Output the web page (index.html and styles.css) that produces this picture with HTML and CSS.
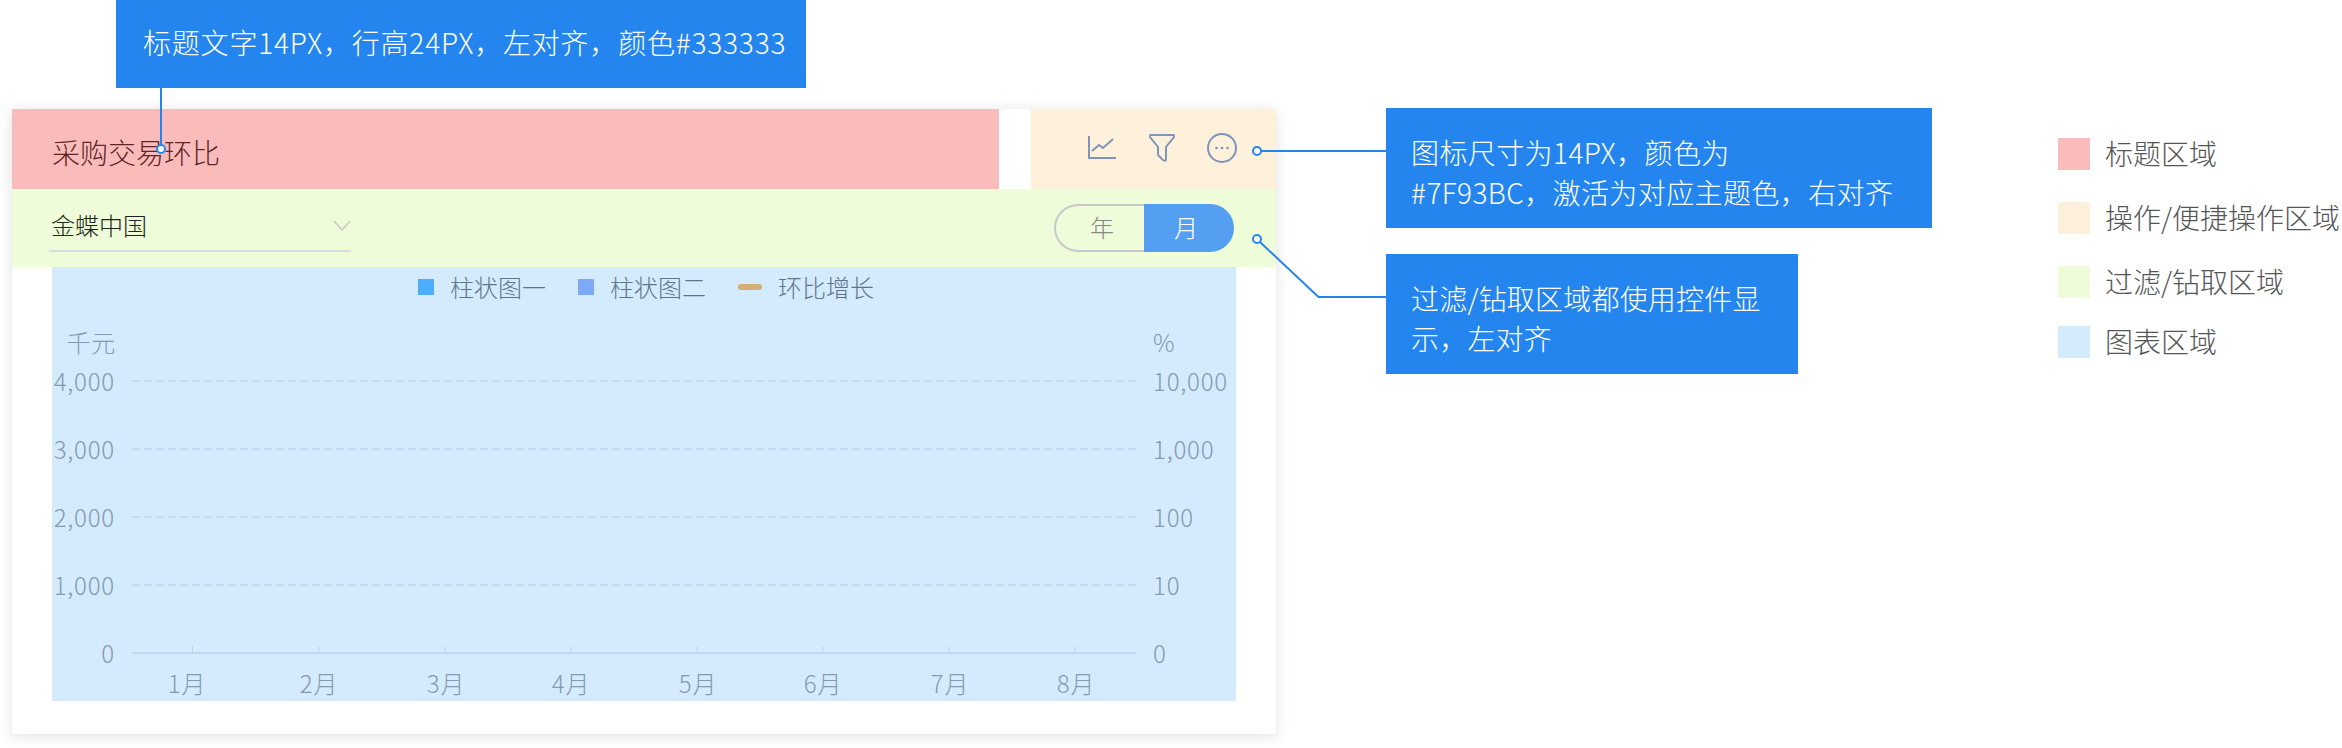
FILE: index.html
```html
<!DOCTYPE html>
<html lang="zh-CN">
<head>
  <meta charset="UTF-8">
  <title>卡片规范</title>
  <link rel="stylesheet" href="styles.css">
</head>
<body>
  <div class="page">
    <div class="left">
      <div class="note note-top">标题文字14PX，行高24PX，左对齐，颜色#333333</div>
      <div class="card">
        <div class="head">
          <div class="title">采购交易环比</div>
          <div class="actions">
            <svg class="icon icon-line" width="28" height="24" viewBox="0 0 28 24"><path d="M1 1V23H28M4 16L11 10L15 13L25 4"/></svg>
            <svg class="icon" width="26" height="28" viewBox="0 0 26 28"><path d="M2 1H24Q26 1 25 3L17 13V25Q17 28 14 26L11 23Q9 22 9 20V13L1 3Q0 1 2 1Z"/></svg>
            <svg class="icon" width="30" height="30" viewBox="0 0 30 30"><circle cx="15" cy="15" r="14"/><circle class="dot" cx="9.500" cy="15" r="1.300"/><circle class="dot" cx="15" cy="15" r="1.300"/><circle class="dot" cx="20.500" cy="15" r="1.300"/></svg>
          </div>
        </div>
        <div class="filter">
          <div class="select">
            <span class="select-text">金蝶中国</span>
            <svg class="chevron" width="18" height="11" viewBox="0 0 18 11"><path d="M1 1L9 10L17 1"/></svg>
          </div>
          <div class="toggle">
            <div class="seg">年</div>
            <div class="seg on">月</div>
          </div>
        </div>
        <div class="chart">
          <div class="legend">
            <div class="legend-item"><i class="sq sq1"></i>柱状图一</div>
            <div class="legend-item"><i class="sq sq2"></i>柱状图二</div>
            <div class="legend-item"><i class="ln"></i>环比增长</div>
          </div>
          <svg class="plot" width="1184" height="394" viewBox="0 0 1184 394">
            <line class="grid" x1="80" y1="74" x2="1084" y2="74"/>
            <line class="grid" x1="80" y1="142" x2="1084" y2="142"/>
            <line class="grid" x1="80" y1="210" x2="1084" y2="210"/>
            <line class="grid" x1="80" y1="278" x2="1084" y2="278"/>
            <line class="axis" x1="80" y1="346" x2="1084" y2="346"/>
            <line class="tick" x1="140.500" y1="339" x2="140.500" y2="346"/>
            <line class="tick" x1="267" y1="339" x2="267" y2="346"/>
            <line class="tick" x1="393" y1="339" x2="393" y2="346"/>
            <line class="tick" x1="519" y1="339" x2="519" y2="346"/>
            <line class="tick" x1="645" y1="339" x2="645" y2="346"/>
            <line class="tick" x1="771" y1="339" x2="771" y2="346"/>
            <line class="tick" x1="897" y1="339" x2="897" y2="346"/>
            <line class="tick" x1="1023" y1="339" x2="1023" y2="346"/>
            <g class="labels end">
              <text x="64" y="34">千元</text>
              <text x="63" y="73">4,000</text>
              <text x="63" y="141">3,000</text>
              <text x="63" y="209">2,000</text>
              <text x="63" y="277">1,000</text>
              <text x="63" y="345">0</text>
            </g>
            <g class="labels">
              <text x="1101" y="34">%</text>
              <text x="1101" y="73">10,000</text>
              <text x="1101" y="141">1,000</text>
              <text x="1101" y="209">100</text>
              <text x="1101" y="277">10</text>
              <text x="1101" y="345">0</text>
            </g>
            <g class="labels mid">
              <text x="135" y="375">1月</text>
              <text x="267" y="375">2月</text>
              <text x="394" y="375">3月</text>
              <text x="519" y="375">4月</text>
              <text x="646" y="375">5月</text>
              <text x="771" y="375">6月</text>
              <text x="898" y="375">7月</text>
              <text x="1024" y="375">8月</text>
            </g>
          </svg>
        </div>
      </div>
    </div>

    <div class="mid">
      <div class="note note-a">图标尺寸为14PX，颜色为<br>#7F93BC，激活为对应主题色，右对齐</div>
      <div class="note note-b">过滤/钻取区域都使用控件显示，左对齐</div>
    </div>

    <div class="key">
      <div class="key-item"><i class="key-sq pink"></i>标题区域</div>
      <div class="key-item"><i class="key-sq orange"></i>操作/便捷操作区域</div>
      <div class="key-item"><i class="key-sq green"></i>过滤/钻取区域</div>
      <div class="key-item last"><i class="key-sq blue"></i>图表区域</div>
    </div>

    <!-- 标注引线 -->
    <svg class="leaders" width="2342" height="748" viewBox="0 0 2342 748">
      <path d="M161 88V149"/>
      <circle cx="161" cy="149" r="4"/>
      <path d="M1261 151H1386"/>
      <circle cx="1257" cy="151" r="4"/>
      <path d="M1260 242L1318.500 297H1386"/>
      <circle cx="1257" cy="239" r="4"/>
    </svg>
  </div>
</body>
</html>
```

FILE: styles.css
```css
*{
  margin: 0;
  padding: 0;
  box-sizing: border-box;
}
body{
  background: #fff;
  font-family: "Noto Sans CJK SC", "Noto Sans", sans-serif;
  font-size: 28px;
  font-weight: 300;
  overflow: hidden;
}
.page{
  width: 2342px;
  height: 748px;
  position: relative;
  display: flex;
  overflow: hidden;
}
.left{
  width: 1276px;
  flex: none;
  padding-left: 12px;
}

/* 蓝色标注 */
.note{
  background: #2585ef;
  color: #fff;
  line-height: 40px;
  height: 120px;
  padding: 24px 25px;
}
.note-top{
  width: 690px;
  height: 88px;
  margin-left: 104px;
  margin-bottom: 21px;
  padding: 0 27px;
  line-height: 84px;
  letter-spacing: 0.8px;
  white-space: nowrap;
}
.note-a{
  width: 546px;
  letter-spacing: 0.4px;
  white-space: nowrap;
}
.note-b{
  width: 412px;
  margin-top: 26px;
  letter-spacing: 0.2px;
}
.mid{
  width: 546px;
  flex: none;
  margin-left: 110px;
  padding-top: 108px;
}

/* 卡片 */
.card{
  width: 1264px;
  height: 625px;
  background: #fff;
  box-shadow: 0 2px 14px rgba(0,0,0,0.12);
}
.head{
  display: flex;
  justify-content: space-between;
  height: 80px;
}
.title{
  width: 987px;
  background: #fabbbb;
  color: #5e2626;
  line-height: 86px;
  padding-left: 40px;
}
.actions{
  width: 245px;
  background: #fef1db;
  display: flex;
  align-items: center;
  justify-content: flex-end;
  gap: 32px;
  padding: 0 39px 2px 0;
}
.icon{
  fill: none;
  stroke: #7f93bc;
  stroke-width: 2;
}
.icon-line{
  margin: 0 1px 2px 0;
}
.icon .dot{
  fill: #7f93bc;
  stroke: none;
}
.filter{
  height: 78px;
  background: #effcd9;
  display: flex;
  align-items: center;
  justify-content: space-between;
  padding: 0 42px 0 37px;
}
.select{
  width: 302px;
  height: 48px;
  border-bottom: 2px solid #dcdcdc;
  display: flex;
  align-items: center;
  justify-content: space-between;
  padding: 0 0 3px 2px;
  color: #222;
  font-size: 24px;
  line-height: 40px;
}
.select-text{
  margin-bottom: 2px;
}
.chevron{
  fill: none;
  stroke: #c8c8c8;
  stroke-width: 1.500;
}
.toggle{
  display: flex;
  width: 180px;
  height: 48px;
  font-size: 24px;
  line-height: 42px;
  text-align: center;
}
.seg{
  width: 90px;
  color: #888;
  border: 2px solid #c9c9c9;
  border-right: none;
  border-radius: 24px 0 0 24px;
  padding-left: 4px;
}
.seg.on{
  color: #fff;
  background: #559ff3;
  border: none;
  line-height: 46px;
  border-radius: 0 24px 24px 0;
  padding: 0 6px 0 0;
}

/* 图表 */
.chart{
  width: 1184px;
  height: 434px;
  margin-left: 40px;
  background: #d4ebfe;
}
.legend{
  height: 38px;
  margin-bottom: 2px;
  display: flex;
  gap: 32px;
  padding-left: 366px;
  font-size: 24px;
  color: #5f7389;
}
.legend-item{
  display: flex;
  align-items: center;
  gap: 16px;
}
.sq{
  width: 16px;
  height: 16px;
  margin-top: 2px;
}
.sq1{
  background: #4dadff;
}
.sq2{
  background: #7ea8f8;
}
.ln{
  width: 24px;
  height: 6px;
  margin-top: 2px;
  border-radius: 3px;
  background: #d3ae76;
}
.plot{
  display: block;
}
.grid{
  stroke: #c3daf0;
  stroke-width: 2;
  stroke-dasharray: 8 4;
}
.axis{
  stroke: #c0d6ec;
  stroke-width: 2;
}
.tick{
  stroke: #c0d6ec;
  stroke-width: 1;
}
.labels text{
  fill: #8599b0;
  font-size: 24px;
  letter-spacing: 0.8px;
  dominant-baseline: central;
}
.labels.end text{
  text-anchor: end;
}
.labels.mid text{
  text-anchor: middle;
}

/* 右侧图例 */
.key{
  flex: none;
  margin-left: 126px;
  padding-top: 138px;
  display: flex;
  flex-direction: column;
  gap: 32px;
  color: #555;
  white-space: nowrap;
}
.key-item{
  display: flex;
  gap: 15px;
  height: 32px;
  line-height: 30px;
}
.key-item.last{
  margin-top: -4px;
}
.key-sq{
  width: 32px;
  height: 32px;
}
.pink{
  background: #fabbbb;
}
.orange{
  background: #fef1db;
}
.green{
  background: #effcd9;
}
.blue{
  background: #d4ebfe;
}

/* 引线盖在内容上面 */
.leaders{
  position: absolute;
  left: 0;
  top: 0;
  pointer-events: none;
}
.leaders path{
  fill: none;
  stroke: #2585ef;
  stroke-width: 2;
}
.leaders circle{
  fill: #fff;
  stroke: #2585ef;
  stroke-width: 2;
}
```
